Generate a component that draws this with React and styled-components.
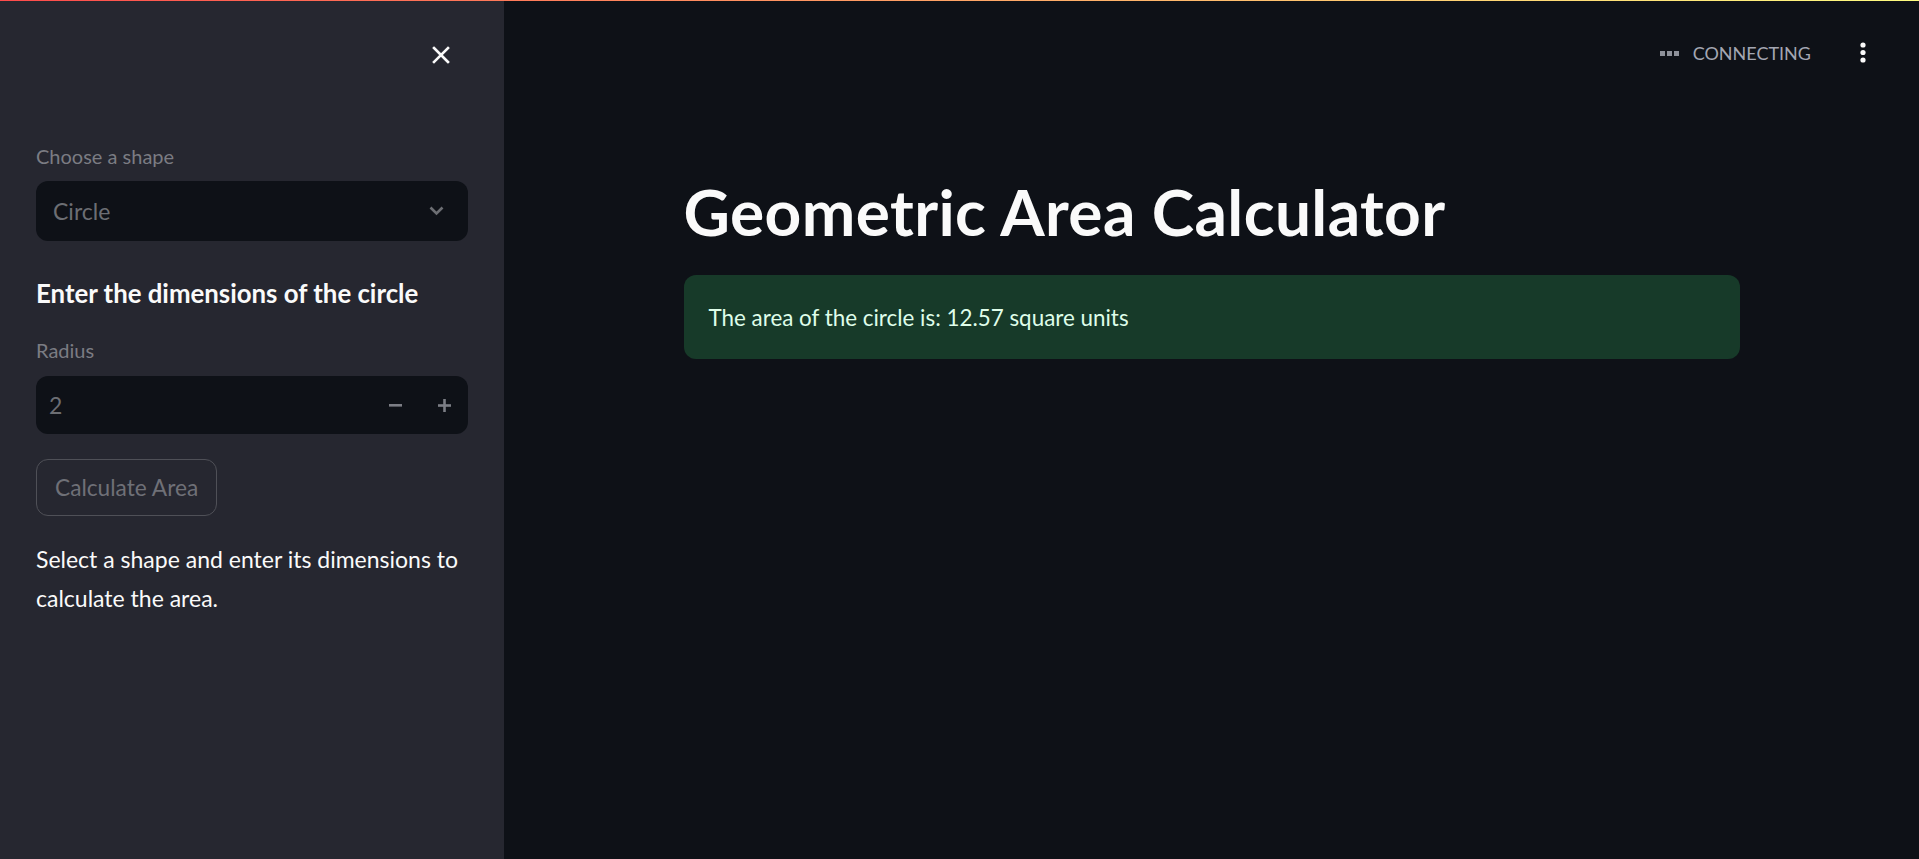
import React from "react";
import styled, { createGlobalStyle } from "styled-components";

const GlobalStyle = createGlobalStyle`
  html, body {
    margin: 0;
    padding: 0;
    background: #0e1117;
  }
  body {
    font-family: Lato, "Noto Sans", sans-serif;
    color: #fafafa;
    overflow: hidden;
  }
  * { box-sizing: border-box; }
`;

const Shell = styled.div`
  display: flex;
  width: 100vw;
  height: 100vh;
  background: #0e1117;
`;

const Decoration = styled.div`
  position: fixed;
  top: 0;
  left: 0;
  right: 0;
  height: 1px;
  background: linear-gradient(90deg, #ff4b4b, #fffd80);
  z-index: 10;
`;

const Sidebar = styled.aside`
  width: 504px;
  flex: 0 0 504px;
  height: 100%;
  background: #262730;
  padding: 0 36px;
  display: flex;
  flex-direction: column;
`;

const SidebarHeader = styled.div`
  height: 110px;
  display: flex;
  align-items: center;
  justify-content: flex-end;
`;

const CloseButton = styled.button`
  width: 18px;
  height: 18px;
  padding: 0;
  margin-right: 18px;
  border: none;
  background: transparent;
  color: #fafafa;
  display: flex;
  align-items: center;
  justify-content: center;
`;

const SidebarContent = styled.div`
  padding-top: 31px;
  display: flex;
  flex-direction: column;
`;

const Field = styled.div`
  display: flex;
  flex-direction: column;
  gap: ${(p) => p.$gap ?? 10}px;
  margin-top: ${(p) => p.$top ?? 0}px;
`;

const Label = styled.label`
  font-size: 20px;
  line-height: 30px;
  color: #7b7c83;
`;

const InputShell = styled.div`
  height: ${(p) => p.$h}px;
  background: #0e1117;
  border-radius: 12px;
  display: flex;
  align-items: center;
  padding: 0 ${(p) => p.$pr ?? 22}px 0 ${(p) => p.$pl ?? 17}px;
`;

const InputValue = styled.span`
  flex: 1;
  font-size: 23px;
  color: #6c6e73;
`;

const StepButton = styled.span`
  width: ${(p) => p.$w ?? 48}px;
  height: 100%;
  display: flex;
  align-items: center;
  justify-content: center;
  color: #7c7e85;
`;

const SubHeading = styled.h3`
  margin: 34px 0 0;
  font-size: 25.8px;
  font-weight: 700;
  line-height: 36px;
  color: #fafafa;
`;

const GhostButton = styled.button`
  align-self: flex-start;
  margin-top: 25px;
  height: 57px;
  padding: 0 18px;
  border: 1px solid #4f5057;
  border-radius: 12px;
  background: transparent;
  font-family: Lato, "Noto Sans", sans-serif;
  font-size: 22.7px;
  color: #6f7077;
`;

const Paragraph = styled.p`
  margin: 24px 0 0;
  font-size: 23px;
  line-height: 39px;
  color: #fafafa;
`;

const Main = styled.main`
  flex: 1;
  height: 100%;
  display: flex;
  flex-direction: column;
`;

const TopBar = styled.header`
  height: 106px;
  display: flex;
  align-items: center;
  justify-content: flex-end;
  padding-right: 36px;
`;

const Status = styled.div`
  display: flex;
  align-items: center;
  gap: 14px;
  margin-right: 32px;
  font-size: 18px;
  color: #a3a6b2;
`;

const MenuButton = styled.button`
  width: 40px;
  height: 40px;
  padding: 0;
  border: none;
  background: transparent;
  display: flex;
  align-items: center;
  justify-content: center;
`;

const Block = styled.div`
  width: 100%;
  max-width: 1104px;
  margin: 0 auto;
  padding: 69px 24px 0;
`;

const Title = styled.h1`
  margin: 0;
  font-size: 64px;
  font-weight: 700;
  line-height: 73px;
  letter-spacing: 0.4px;
  color: #fafafa;
`;

const Alert = styled.div`
  margin-top: 27px;
  height: 84px;
  border-radius: 12px;
  background: #173a29;
  display: flex;
  align-items: center;
  padding: 0 25px;
  font-size: 22.4px;
  color: #dffde9;
`;

const Dots = () => (
  <svg width="19" height="5" viewBox="0 0 19 5" fill="#8e919a">
    <rect x="0" y="0" width="5" height="5" />
    <rect x="7" y="0" width="5" height="5" />
    <rect x="14" y="0" width="5" height="5" />
  </svg>
);

const Kebab = () => (
  <svg width="6" height="22" viewBox="0 0 6 22" fill="#fafafa">
    <circle cx="3" cy="3" r="2.6" />
    <circle cx="3" cy="10.5" r="2.6" />
    <circle cx="3" cy="18" r="2.6" />
  </svg>
);

export default function App() {
  return (
    <>
      <GlobalStyle />
      <Decoration />
      <Shell>
        <Sidebar>
          <SidebarHeader>
            <CloseButton aria-label="Close sidebar">
              <svg width="18" height="18" viewBox="0 0 18 18" fill="none" stroke="currentColor" strokeWidth="2.6" strokeLinecap="square">
                <path d="M2 2 L16 16 M16 2 L2 16" />
              </svg>
            </CloseButton>
          </SidebarHeader>
          <SidebarContent>
            <Field>
              <Label>Choose a shape</Label>
              <InputShell $h={60} $pl={17} $pr={24}>
                <InputValue>Circle</InputValue>
                <svg width="15" height="10" viewBox="0 0 15 10" fill="none" stroke="#6c6e73" strokeWidth="2.6">
                  <path d="M1.5 1.5 L7.5 7.5 L13.5 1.5" />
                </svg>
              </InputShell>
            </Field>
            <SubHeading>Enter the dimensions of the circle</SubHeading>
            <Field $top={24} $gap={11}>
              <Label>Radius</Label>
              <InputShell $h={58} $pl={13} $pr={0}>
                <InputValue>2</InputValue>
                <StepButton $w={49}>
                  <svg width="13" height="3" viewBox="0 0 13 3"><rect width="13" height="2.6" fill="currentColor" /></svg>
                </StepButton>
                <StepButton $w={48}>
                  <svg width="13" height="13" viewBox="0 0 13 13" fill="currentColor">
                    <rect x="0" y="5.2" width="13" height="2.6" />
                    <rect x="5.2" y="0" width="2.6" height="13" />
                  </svg>
                </StepButton>
              </InputShell>
            </Field>
            <GhostButton disabled>Calculate Area</GhostButton>
            <Paragraph>Select a shape and enter its dimensions to calculate the area.</Paragraph>
          </SidebarContent>
        </Sidebar>
        <Main>
          <TopBar>
            <Status>
              <Dots />
              <span>CONNECTING</span>
            </Status>
            <MenuButton aria-label="Main menu">
              <Kebab />
            </MenuButton>
          </TopBar>
          <Block>
            <Title>Geometric Area Calculator</Title>
            <Alert>The area of the circle is: 12.57 square units</Alert>
          </Block>
        </Main>
      </Shell>
    </>
  );
}
